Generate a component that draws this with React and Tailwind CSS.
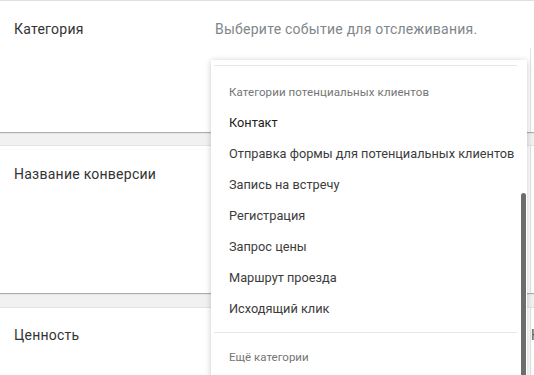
export default function App() {
  const items = [
    "Контакт",
    "Отправка формы для потенциальных клиентов",
    "Запись на встречу",
    "Регистрация",
    "Запрос цены",
    "Маршрут проезда",
    "Исходящий клик",
  ];
  return (
    <div
      className="relative h-[375px] w-[534px] overflow-hidden bg-[#f1f1f1]"
      style={{ fontFamily: "Roboto, 'Noto Sans', sans-serif" }}
    >
      <div className="h-px bg-[#e0e0e0]" />
      {/* Card 1 */}
      <div className="flex h-[131px] bg-white shadow-[0_1px_1px_rgba(0,0,0,0.28)]">
        <div className="w-[215px] pl-[14px] pt-[19px] text-[14px] leading-[18px] tracking-[0.25px] text-[#333]">
          Категория
        </div>
        <div className="flex-1 pt-[19px] text-[14px] leading-[18px] tracking-[0.25px] text-[#80868b]">
          Выберите событие для отслеживания.
        </div>
        <div className="mt-[47px] w-[4px] border-l border-[#e3e3e3]" />
      </div>
      {/* Card 2 */}
      <div className="mt-[14px] flex h-[147px] bg-white shadow-[0_1px_1px_rgba(0,0,0,0.28),0_-1px_0_rgba(0,0,0,0.05)]">
        <div className="flex-1 pl-[14px] pt-[19px] text-[14px] leading-[18px] tracking-[0.25px] text-[#333]">
          Название конверсии
        </div>
        <div className="w-[4px] border-l border-[#e3e3e3]" />
      </div>
      {/* Card 3 */}
      <div className="mt-[15px] flex h-[80px] bg-white shadow-[0_-1px_0_rgba(0,0,0,0.05)]">
        <div className="flex-1 pl-[14px] pt-[18px] text-[14px] leading-[18px] tracking-[0.25px] text-[#333]">
          Ценность
        </div>
        <div className="w-[4px] overflow-hidden border-l border-[#e3e3e3] pt-[18px] text-[14px] leading-[18px] text-[#555]">
          Н
        </div>
      </div>

      {/* Dropdown */}
      <div className="absolute left-[211px] top-[60px] h-[330px] w-[316px] bg-white shadow-[0_1px_6px_rgba(0,0,0,0.22)]">
        <div className="pt-[5px]">
          <div className="ml-[3px] mr-[10px] h-px bg-[#e6e6e6]" />
        </div>
        <div className="pl-[18px] pt-[19px] pb-[8px] text-[11.5px] leading-[14px] tracking-[0.1px] text-[#757575]">
          Категории потенциальных клиентов
        </div>
        {items.map((t, i) => (
          <div
            key={t}
            className={
              i === 0
                ? "flex h-[31px] items-center pl-[18px] text-[12.75px] text-[#212121]"
                : "flex h-[31px] items-center pl-[18px] text-[12.75px] text-[#3c3c3c]"
            }
          >
            {t}
          </div>
        ))}
        <div className="ml-[3px] mr-[10px] mt-[8px] h-px bg-[#e6e6e6]" />
        <div className="pl-[18px] pt-[17px] text-[11.5px] leading-[14px] text-[#757575]">
          Ещё категории
        </div>
        <div className="absolute left-[310px] top-[133px] h-[220px] w-[5px] rounded-full bg-[#6d6d6d]" />
      </div>
    </div>
  );
}
